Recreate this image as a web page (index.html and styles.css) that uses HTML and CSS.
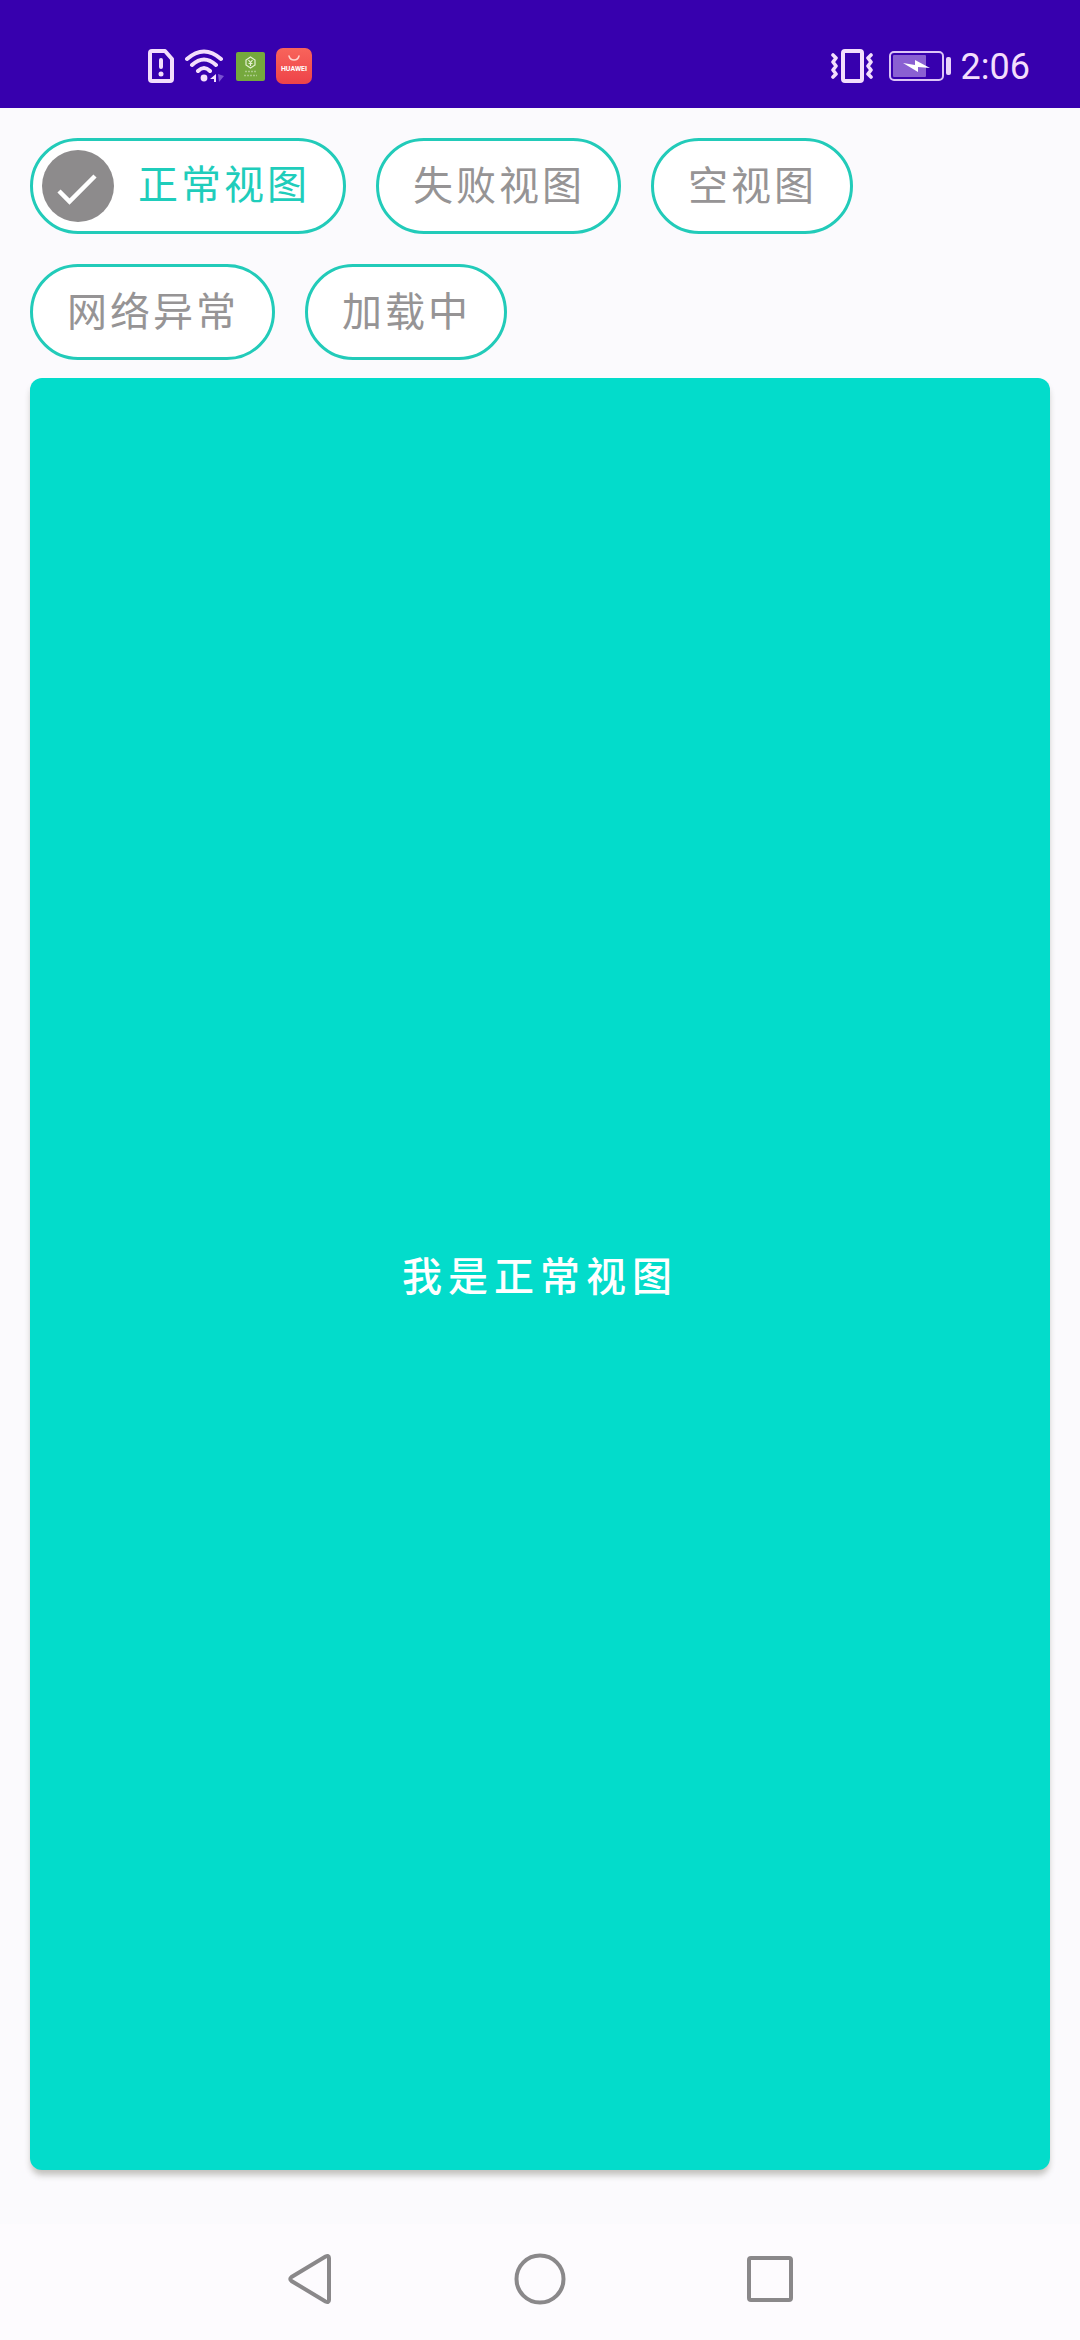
FILE: index.html
```html
<!DOCTYPE html>
<html lang="zh-CN">
<head>
<meta charset="utf-8">
<meta name="viewport" content="width=device-width">
<title>正常视图</title>
<link rel="stylesheet" href="styles.css">
</head>
<body>
<header class="status">
  <div class="status-left">
    <svg width="26" height="34" viewBox="0 0 26 34" fill="none" stroke="#f3defc" stroke-width="4" stroke-linejoin="round" stroke-linecap="round"><path d="M4 2H17L24 10V30Q24 32 22 32H4Q2 32 2 30V4Q2 2 4 2Z"/><path d="M13 11V18"/><circle cx="13" cy="25" r="2.5" fill="#f3defc" stroke="none"/></svg>
    <svg width="40" height="34" viewBox="0 0 40 34" fill="none" stroke="#f3defc" stroke-width="4" stroke-linecap="round"><path d="M2 10Q19 -5 36 10M7 16Q19 5 31 16M13 22Q19 16 25 22"/><circle cx="19" cy="29" r="3.4" fill="#f3defc" stroke="none"/><path d="M31 25V33H29V30H25Z" fill="#f3defc" stroke="none"/><path d="M33 25L39 27L34 33Z" fill="#7a52d0" stroke="none"/></svg>
    <svg width="29" height="29" viewBox="0 0 29 29"><rect width="29" height="29" rx="2" fill="#75a83d"/><path d="M14.500 5L19 8V13L14.500 16L10 13V8Z" fill="none" stroke="#e4f0d2" stroke-width="1.200"/><path d="M12.500 8L14.500 10.500L16.500 8M14.500 10V14M12.500 11.500H16.500" fill="none" stroke="#e4f0d2" stroke-width="1.200"/><path d="M9 19.500H20M8 23.500H21" stroke="#a9c987" stroke-width="1.500" stroke-dasharray="2 1"/></svg>
    <svg width="36" height="36" viewBox="0 0 36 36"><defs><linearGradient id="r" x2="0" y2="1"><stop stop-color="#f8645b"/><stop offset="1" stop-color="#ee4349"/></linearGradient></defs><rect width="36" height="36" rx="7" fill="url(#r)"/><path d="M13 8Q14 12 18 12T23 8" fill="none" stroke="#ffd2cc" stroke-width="1.500" stroke-linecap="round"/><text x="18" y="23" class="brand" text-anchor="middle">HUAWEI</text></svg>
  </div>
  <div class="status-right">
    <svg class="vibrate" width="42" height="34" viewBox="0 0 42 34" fill="none" stroke="#f3defc" stroke-width="3.400" stroke-linejoin="round" stroke-linecap="round"><rect x="12" y="2" width="19" height="30" rx="2" stroke-width="4"/><path d="M2 6L5 9L2 13L5 17L2 21L5 25L2 28M40 6L37 9L40 13L37 17L40 21L37 25L40 28" stroke-width="3.600"/></svg>
    <svg width="62" height="30" viewBox="0 0 62 30"><rect x="1" y="1" width="53" height="28" rx="4" fill="none" stroke="#dcc4f6" stroke-width="2"/><rect x="4" y="4" width="33" height="22" rx="1" fill="#8a60d2"/><path d="M14 12L26 14V9L41 17L29 16V21Z" fill="#fff"/><rect x="57" y="6" width="5" height="18" rx="2" fill="#e9d2fb"/></svg>
    <time class="clock">2:06</time>
  </div>
</header>
<main class="content">
  <div class="chips" role="group" aria-label="视图">
    <button class="chip chip-on" type="button" aria-pressed="true"><svg width="72" height="72" viewBox="0 0 72 72"><circle cx="36" cy="36" r="36" fill="#8d8b8c"/><path d="M17 41L27.500 51.500L53 26" fill="none" stroke="#fff" stroke-width="4.500"/></svg>正常视图</button>
    <button class="chip" type="button" aria-pressed="false">失败视图</button>
    <button class="chip" type="button" aria-pressed="false">空视图</button>
    <button class="chip" type="button" aria-pressed="false">网络异常</button>
    <button class="chip" type="button" aria-pressed="false">加载中</button>
  </div>
  <button class="panel" type="button">我是正常视图</button>
</main>
<nav class="nav">
  <button class="key" type="button" aria-label="返回"><svg width="44" height="52" viewBox="0 0 44 52"><path d="M3.500 24L37.500 3.500Q41 2 41 5V47Q41 50 37.500 48.500L3.500 28Q1 26 3.500 24Z"/></svg></button>
  <button class="key" type="button" aria-label="主页"><svg width="52" height="52" viewBox="0 0 52 52"><circle cx="26" cy="26" r="23.500"/></svg></button>
  <button class="key" type="button" aria-label="最近任务"><svg width="46" height="46" viewBox="0 0 46 46"><rect x="2" y="2" width="42" height="42" rx="2"/></svg></button>
</nav>
</body>
</html>
```
FILE: styles.css
```css
* {
  box-sizing: border-box;
}

body {
  margin: 0;
  min-height: 100vh;
  display: flex;
  flex-direction: column;
  background: #fbfafd;
  font-family: Roboto, "Noto Sans CJK SC", sans-serif;
}

button {
  margin: 0;
  border: 0;
  font: inherit;
}

svg {
  display: block;
  flex: none;
}

.status {
  height: 108px;
  padding: 24px 50px 0 148px;
  display: flex;
  align-items: center;
  justify-content: space-between;
  background: #3700ae;
}

.status-left,
.status-right {
  display: flex;
  align-items: center;
  gap: 11px;
}

.status-right {
  gap: 10px;
}

.vibrate {
  margin-right: 6px;
}

.brand {
  font-size: 7px;
  font-weight: 700;
  fill: #fff;
}

.clock {
  padding-top: 2px;
  font-size: 36px;
  line-height: 40px;
  color: #f3defc;
}

.content {
  flex: 1;
  display: flex;
  flex-direction: column;
  gap: 18px;
  padding: 30px 30px 54px;
}

.chips {
  display: flex;
  flex-wrap: wrap;
  gap: 30px;
}

.chip {
  height: 96px;
  padding: 2px 33px 0 34px;
  display: flex;
  align-items: center;
  gap: 24px;
  border: 3px solid #22cbb9;
  border-radius: 48px;
  background: #fff;
  color: #969495;
  font-size: 40px;
  line-height: 48px;
  letter-spacing: 3px;
}

.chip-on {
  padding: 0 33px 0 9px;
  color: #1fcdbb;
}

.panel {
  flex: 1;
  border-radius: 12px;
  background: #03dccb;
  box-shadow: 0 6px 6px -1px rgba(60, 60, 40, 0.3);
  color: #fff;
  font-size: 40px;
  font-weight: 500;
  letter-spacing: 6px;
}

.nav {
  height: 116px;
  padding-bottom: 6px;
  display: flex;
  justify-content: center;
  background: #fdfbfe;
}

.key {
  width: 230px;
  padding: 0;
  display: flex;
  align-items: center;
  justify-content: center;
  background: none;
}

.key svg {
  fill: none;
  stroke: #8a888a;
  stroke-width: 4px;
}
```
